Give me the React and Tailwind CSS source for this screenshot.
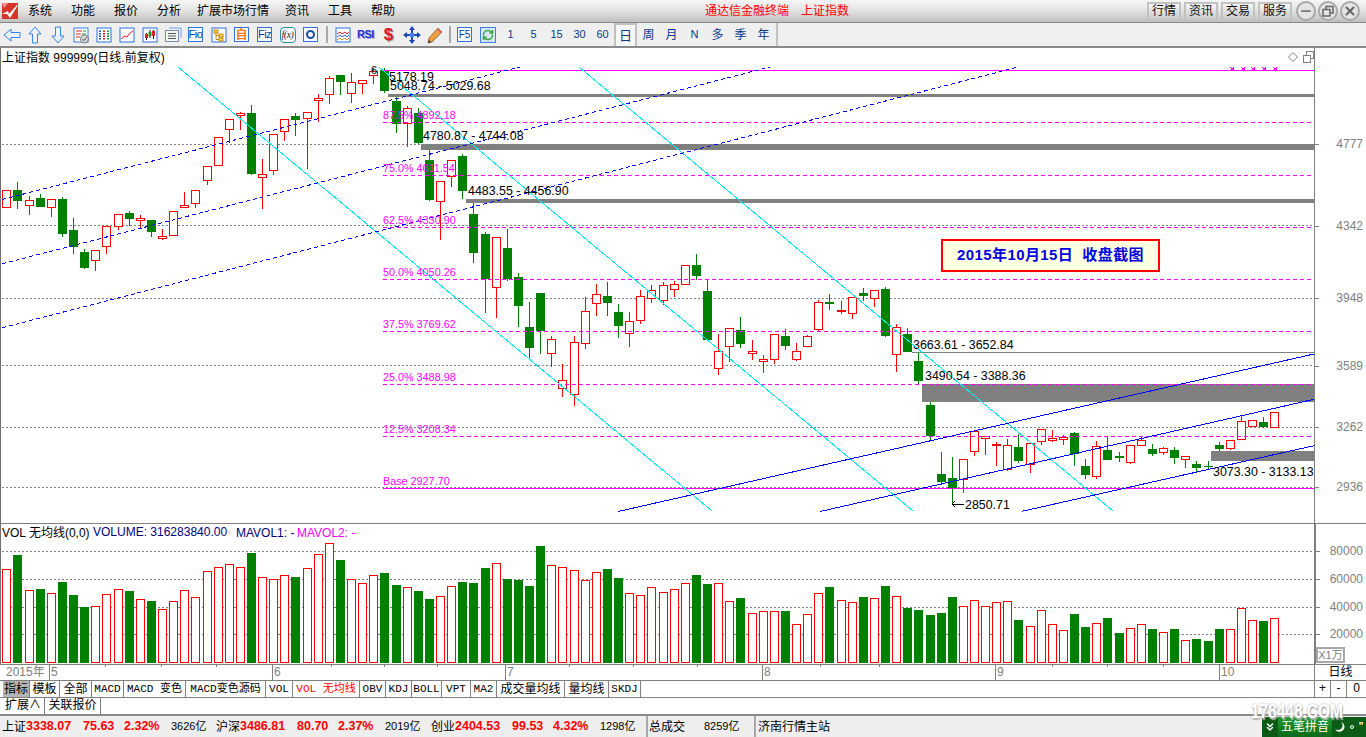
import React from 'react';
import { Minus, X, RefreshCw, ChevronsDown } from 'lucide-react';

// ── candle data: [g|r, bodyTop, bodyBottom, wickTop, wickBottom] in page pixels ─────
const CANDLES = [
  ['r',190,207],['g',190,200,182,208],['r',200,205,196,214],['g',198,206,194,206],['r',199,207,199,216],
  ['g',199,233,197,236],['g',230,246,218,253],['g',252,267,249,268],['r',250,260,250,270],['r',226,246,226,253],
  ['r',214,226,214,229],['g',213,218,211,225],['r',218,220,215,227],['g',220,231,220,236],['r',236,238,229,239],
  ['r',211,235],['r',205,207,192,207],['r',190,203,190,207],['r',166,180,166,184],['r',137,165],
  ['r',119,129,119,142],['r',113,115,112,129],['g',113,173,105,174],['r',174,177,159,208],['r',134,170,134,174],
  ['r',119,131,119,140],['g',116,119,113,135],['r',112,118,112,168],['r',98,100,94,121],['r',78,94,76,103],
  ['g',75,81,75,94],['r',82,93,73,102],['r',80,83,80,93],['r',71,75,68,83],['g',70,90,68,92],
  ['g',101,123,97,132],['r',108,123,106,146],['g',113,142,108,143],['g',160,199,150,200],['r',181,201,181,239],
  ['r',160,176,160,186],['g',156,190,154,198],['g',214,252,203,262],['g',234,278,232,312],['r',237,287,237,317],
  ['g',248,278,229,280],['g',277,305,273,326],['g',327,347,302,357],['g',293,330,293,353],['r',339,353,336,366],
  ['r',380,388,364,396],['r',342,394,336,405],['r',311,343,297,348],['r',294,303,284,315],['g',296,302,282,315],
  ['g',312,325,304,337],['r',321,333,312,346],['r',296,320,290,323],['r',290,298,285,302],['r',285,300,282,304],
  ['r',284,289,281,296],['r',265,284],['g',265,275,254,279],['g',291,339,279,339],['r',351,368,334,374],
  ['r',328,346,328,361],['g',330,343,317,347],['r',351,353,340,359],['r',359,361,355,372],['r',334,359,334,363],
  ['g',336,345,329,349],['r',351,359,343,360],['r',336,346,335,346],['r',302,329,300,330],['g',302,303,294,309],
  ['r',310,311,301,313],['r',297,313,297,318],['g',293,295,288,300],['r',290,298,290,306],['g',289,335,287,336],
  ['r',327,354,324,371],['g',334,351,328,351],['g',361,380,353,383],['g',405,435,402,439],['g',474,481,452,484],
  ['g',478,487,457,503],['r',459,479,459,492],['r',431,451,431,455],['r',436,438,436,454],['r',444,445,442,465],
  ['r',445,469,439,470],['g',447,460,434,462],['r',443,464,443,472],['r',429,441,429,444],['r',438,440,430,441],
  ['r',437,439,435,444],['g',433,453,432,465],['g',466,474,459,478],['r',446,476,441,478],['g',450,459,436,459],
  ['g',456,457,452,461],['r',445,462,445,463],['r',440,445,437,445],['g',449,453,444,455],['r',448,452,447,454],
  ['g',450,457,447,463],['r',456,459,456,467],['g',464,467,461,471],['g',466,466,461,469],['g',445,448,442,450],
  ['r',440,448,440,449],['r',421,439,416,439],['r',420,426],['g',422,426,417,427],['r',412,427],
];

// volume bar tops, measured as (y - 520) * 3; bars all sit on y=663
const VOL_ZOOM = [
  148,105,211,207,220,186,225,261,259,223,208,213,238,243,268,244,211,232,154,142,133,142,99,172,178,166,171,145,103,70,
  120,178,190,166,159,195,202,213,237,229,199,186,189,144,130,177,180,198,78,136,142,151,181,157,147,174,220,226,202,217,208,
  190,165,192,190,244,234,280,274,274,273,313,283,220,201,241,247,231,235,198,229,264,270,285,279,231,259,241,259,247,244,
  300,319,271,313,331,282,321,310,294,339,325,313,327,337,327,361,357,363,327,328,265,301,303,295,
];

const centerX = (i) => Math.round(6.3 + 11.123 * i);

const FIB = [
  ['87.5% 4892.18', 122, 115],
  ['75.0% 4611.54', 175, 168],
  ['62.5% 4330.90', 227, 220],
  ['50.0% 4050.26', 279, 272],
  ['37.5% 3769.62', 331, 324],
  ['25.0% 3488.98', 384, 377],
  ['12.5% 3208.34', 436, 429],
];

const PRICE_LABELS = [
  ['5178.19', 389, 76],
  ['5048.74 - 5029.68', 390, 85.5],
  ['4780.87 - 4744.08', 423, 135],
  ['4483.55 - 4456.90', 468, 190],
  ['3663.61 - 3652.84', 913, 344],
  ['3490.54 - 3388.36', 925, 375],
  ['3073.30 - 3133.13', 1213, 471],
  ['2850.71', 965, 504],
];

function MainChart() {
  return (
    <svg width="1314" height="475" viewBox="0 48 1314 475" className="block">
      {/* dotted price grid */}
      {[144, 225, 298, 365, 427, 487].map((y) => (
        <line key={y} x1="2" x2="1314" y1={y + 0.5} y2={y + 0.5} stroke="#808080" strokeDasharray="2 2" shapeRendering="crispEdges" />
      ))}

      {/* candles */}
      {CANDLES.map(([t, top, bot, wt, wb], i) => {
        const x = centerX(i);
        const color = t === 'r' ? '#ff0000' : '#008000';
        return (
          <g key={i} shapeRendering="crispEdges">
            <rect x={x} y={wt ?? top} width="1" height={(wb ?? bot) - (wt ?? top) + 1} fill={color} />
            {t === 'g' ? (
              <rect x={x - 4} y={top} width="9" height={bot - top + 1} fill={color} />
            ) : (
              <rect x={x - 3.5} y={top + 0.5} width="8" height={bot - top} fill="#fff" stroke={color} />
            )}
          </g>
        );
      })}

      {/* gray zones */}
      <g fill="#808080" shapeRendering="crispEdges">
        <rect x="388" y="94" width="926" height="3" />
        <rect x="421" y="144" width="893" height="6" />
        <rect x="466" y="199" width="848" height="4" />
        <rect x="912" y="352" width="402" height="1" />
        <rect x="922" y="384" width="392" height="18" />
        <rect x="1211" y="451" width="103" height="10" />
      </g>

      {/* fibonacci lines */}
      <g stroke="#ff00ff" shapeRendering="crispEdges">
        <line x1="383" x2="1314" y1="70.5" y2="70.5" />
        <line x1="383" x2="1314" y1="488.5" y2="488.5" />
        {FIB.map(([, y]) => (
          <line key={y} x1="383" x2="1314" y1={y + 0.5} y2={y + 0.5} strokeDasharray="4 3" />
        ))}
      </g>
      <g shapeRendering="crispEdges">
        {[1232, 1243, 1253, 1264, 1275].map((x) => (
          <g key={x}>
            <rect x={x - 1} y="68" width="3" height="3" fill="#ff00ff" />
            <path d={`M${x - 2} 67 L${x + 2} 71 M${x + 2} 67 L${x - 2} 71`} stroke="#ff00ff" />
          </g>
        ))}
      </g>

      {/* channel lines */}
      <g stroke="#00f0f0" shapeRendering="crispEdges">
        <line x1="178" y1="67" x2="712" y2="511" />
        <line x1="379" y1="67" x2="913" y2="511" />
        <line x1="579" y1="67" x2="1113" y2="511" />
      </g>
      <g stroke="#0000ff" strokeDasharray="4 3" shapeRendering="crispEdges">
        <line x1="2" y1="199.5" x2="520" y2="67" />
        <line x1="2" y1="263.8" x2="770" y2="67" />
        <line x1="2" y1="327.8" x2="1018" y2="67" />
      </g>
      <g stroke="#0000ff" shapeRendering="crispEdges">
        <line x1="618" y1="511.5" x2="1314" y2="354" />
        <line x1="820" y1="511.5" x2="1314" y2="399.3" />
        <line x1="1022" y1="511.3" x2="1314" y2="445.7" />
      </g>

      {/* labels */}
      <g fontSize="10.8" fill="#ff00ff">
        {FIB.map(([label, , y]) => (
          <text key={label} x="383" y={y + 4}>{label}</text>
        ))}
        <text x="383" y="485">Base 2927.70</text>
      </g>
      <g fontSize="12.4" fill="#000">
        <text x="371" y="74" fontSize="11">6</text>
        {PRICE_LABELS.map(([label, x, y]) => (
          <text key={label} x={x} y={y + 4.5}>{label}</text>
        ))}
      </g>
      <path d="M952 504 H964 M952 504 l3 -3 M952 504 l3 3" stroke="#000" fill="none" shapeRendering="crispEdges" />
      <path d="M1293 52.5 l4.5 4.5 -4.5 4.5 -4.5 -4.5 z" stroke="#808080" fill="#fff" />
      <path d="M1303.5 55.5 h7 v7 h-7 z M1306.5 55 v-3.5 h7 v7 h-3" stroke="#808080" fill="#fff" shapeRendering="crispEdges" />
    </svg>
  );
}

function VolumeChart() {
  const tops = VOL_ZOOM.map((z) => Math.round(520 + z / 3));
  return (
    <svg width="1314" height="140" viewBox="0 524 1314 140" className="block">
      {[551, 579, 607, 634].map((y) => (
        <line key={y} x1="2" x2="1314" y1={y + 0.5} y2={y + 0.5} stroke="#808080" strokeDasharray="2 2" shapeRendering="crispEdges" />
      ))}
      {tops.map((top, i) => {
        const x = centerX(i);
        const t = CANDLES[i][0];
        return t === 'g' ? (
          <rect key={i} x={x - 4} y={top} width="9" height={663 - top} fill="#008000" shapeRendering="crispEdges" />
        ) : (
          <rect key={i} x={x - 3.5} y={top + 0.5} width="8" height={662 - top} fill="#fff" stroke="#ff0000" shapeRendering="crispEdges" />
        );
      })}
    </svg>
  );
}

// ── toolbar pieces ─────────────────────────────────────────────────────────────
function BoxIcon({ children, cls = '' }) {
  return (
    <div className={`w-[15px] h-[15px] border border-[#2f74dc] bg-white flex items-center justify-center overflow-hidden ${cls}`}>
      {children}
    </div>
  );
}

function Cell({ children }) {
  return <div className="w-[23px] h-full flex items-center justify-center shrink-0">{children}</div>;
}

function Svg20({ children }) {
  return <svg width="20" height="20" viewBox="0 0 20 20" fill="none">{children}</svg>;
}

function Toolbar() {
  const blueFill = { fill: '#eaf2ff', stroke: '#3b80e4' };
  return (
    <div className="h-[25px] bg-[#efefef] border-b-2 border-[#8a8a8a] flex items-stretch">
      <Cell><Svg20><path d="M2 10 L9 4 V7.5 H18 V12.5 H9 V16 Z" {...blueFill} /></Svg20></Cell>
      <Cell><Svg20><path d="M10 2 L16 9 H12.5 V18 H7.5 V9 H4 Z" {...blueFill} /></Svg20></Cell>
      <Cell><Svg20><path d="M10 18 L16 11 H12.5 V2 H7.5 V11 H4 Z" {...blueFill} /></Svg20></Cell>
      <Cell>
        <Svg20>
          <rect x="3" y="3" width="14" height="14" stroke="#3b80e4" fill="#fff" />
          <path d="M5 6h6M5 9h5M5 12h4" stroke="#e02020" />
          <path d="M12 6h3M11 9h4" stroke="#149a2a" />
          <circle cx="13.5" cy="14" r="4" fill="#d8d8d8" stroke="#777" />
          <path d="M11.5 14l1.5 1.5 2.5-3" stroke="#444" />
        </Svg20>
      </Cell>
      <Cell>
        <Svg20>
          <rect x="3" y="3" width="14" height="14" stroke="#2f74dc" fill="#fff" />
          <path d="M6 5.5v9" stroke="#2050d0" strokeWidth="2" strokeDasharray="1.5 1" />
          <path d="M10 5.5v9" stroke="#e02020" strokeWidth="2" strokeDasharray="1.5 1" />
          <path d="M14 5.5v9" stroke="#149a2a" strokeWidth="2" strokeDasharray="1.5 1" />
        </Svg20>
      </Cell>
      <Cell>
        <Svg20>
          <rect x="3" y="3" width="14" height="14" stroke="#2f74dc" fill="#fff" />
          <path d="M4 14 L8 11 L10 12 L13 8 L16 6" stroke="#e02020" />
        </Svg20>
      </Cell>
      <Cell>
        <Svg20>
          <rect x="3" y="3" width="14" height="14" stroke="#2f74dc" fill="#fff" />
          <path d="M6.5 8v7M10 5v8M13.5 5v9" stroke="#111" />
          <rect x="5" y="9" width="3" height="4" fill="#e02020" />
          <rect x="8.5" y="7" width="3" height="4" fill="#149a2a" />
          <rect x="12" y="6" width="3" height="5" fill="#e02020" />
        </Svg20>
      </Cell>
      <Cell>
        <Svg20>
          <path d="M6 3 H18 V13" stroke="#6aa0e8" />
          <rect x="2.5" y="5.5" width="13" height="11" stroke="#7a8aa8" fill="#f4f6fa" />
          <path d="M5 8.5h8M5 11h8M5 13.5h8" stroke="#555" />
        </Svg20>
      </Cell>
      <Cell><BoxIcon><span className="text-[11px] leading-none text-[#003a9a] font-['Liberation_Sans'] tracking-[-0.5px]">Fio</span></BoxIcon></Cell>
      <Cell>
        <Svg20>
          <rect x="3" y="3" width="14" height="14" stroke="#2f74dc" fill="#fff" />
          <rect x="5" y="5" width="4" height="3" fill="#ffd84a" stroke="#c08a10" />
          <rect x="10" y="9" width="4" height="3" fill="#ffd84a" stroke="#c08a10" />
          <rect x="10" y="13" width="4" height="3" fill="#ffd84a" stroke="#c08a10" />
          <path d="M7 8v6.5h3M7 10.5h3" stroke="#c08a10" />
        </Svg20>
      </Cell>
      <Cell><BoxIcon><span className="text-[12px] leading-none font-bold text-[#f07818]">自</span></BoxIcon></Cell>
      <Cell><BoxIcon><span className="text-[11px] leading-none text-[#003a9a] font-['Liberation_Sans'] tracking-[-0.5px]">Fiz</span></BoxIcon></Cell>
      <Cell>
        <div className="w-[16px] h-[16px] rounded-[4px] border border-[#1f8f9a] bg-white flex items-center justify-center">
          <span className="text-[10px] leading-none italic text-[#123] font-['Liberation_Serif'] tracking-[-0.5px]">f(x)</span>
        </div>
      </Cell>
      <Cell><BoxIcon><div className="w-[9px] h-[9px] rounded-full border-2 border-[#1a4fa8]" /></BoxIcon></Cell>

      <div className="w-[9px] flex justify-center py-[3px]"><div className="w-[2px] bg-[#a8a8a8]" /></div>

      <Cell>
        <Svg20>
          <rect x="3" y="3" width="14" height="14" stroke="#2f74dc" fill="#fff" />
          <path d="M4 9l3-2 2 2 3-2 2 2 2-2" stroke="#e02020" />
          <path d="M4 12l3-2 2 2 3-2 2 2 2-2" stroke="#3060e0" />
          <path d="M4 15l3-2 2 2 3-2 2 2 2-2" stroke="#e09020" />
        </Svg20>
      </Cell>
      <Cell><span className="text-[11px] leading-none font-bold text-[#2233cc] font-['Liberation_Sans'] tracking-[-0.5px] [text-shadow:1px_1px_0_#a8b0e0]">RSI</span></Cell>
      <Cell><span className="text-[17px] leading-none font-bold text-[#d62020] font-['Liberation_Sans'] [text-shadow:1px_1px_0_#999]">$</span></Cell>
      <Cell>
        <Svg20>
          <path d="M10 1l3 4h-6zM10 19l3-4h-6zM1 10l4-3v6zM19 10l-4-3v6z" fill="#1844b8" />
          <path d="M10 5v10M5 10h10" stroke="#1844b8" strokeWidth="2" />
          <circle cx="10" cy="10" r="2.5" fill="#4a80e8" />
        </Svg20>
      </Cell>
      <Cell>
        <Svg20>
          <path d="M4 13 L13 3 L17 7 L7 17 L3 18 Z" fill="#f0a040" stroke="#9a7040" />
          <path d="M13 3 L17 7 L15.5 8.5 L11.5 4.5 Z" fill="#e07070" />
          <path d="M3 18 L4 15 L6 17 Z" fill="#333" />
        </Svg20>
      </Cell>

      <div className="w-[7px] flex justify-center py-[3px]"><div className="w-[2px] bg-[#a8a8a8]" /></div>

      <Cell><BoxIcon cls="border-[#1f6ad8]"><span className="text-[10px] leading-none text-[#003a9a] font-['Liberation_Sans']">F5</span></BoxIcon></Cell>
      <Cell>
        <div className="w-[16px] h-[16px] border border-[#3b80e4] bg-[#d7e6fa] flex items-center justify-center">
          <RefreshCw size={12} strokeWidth={3} color="#39a83c" />
        </div>
      </Cell>
      {['1', '5', '15', '30', '60'].map((t) => (
        <Cell key={t}><span className="text-[11px] text-[#0a3a8a]">{t}</span></Cell>
      ))}
      <div className="w-[23px] h-full flex items-center justify-center bg-[#f7f7f7] border-2 border-[#c0c0c0] border-b-0 text-[13px] text-[#0a3a8a]">日</div>
      {['周', '月', 'N', '多', '季', '年'].map((t) => (
        <Cell key={t}><span className={t === 'N' ? 'text-[11px] text-[#0a3a8a]' : 'text-[12px] text-[#0a3a8a]'}>{t}</span></Cell>
      ))}
      <div className="w-[2px] ml-[1px] bg-[#c4c4c4]" />
    </div>
  );
}

function MenuBar() {
  const menus = [
    ['系统', 'w-[43px]'], ['功能', 'w-[43px]'], ['报价', 'w-[43px]'], ['分析', 'w-[40px]'],
    ['扩展市场行情', 'w-[88px]'], ['资讯', 'w-[43px]'], ['工具', 'w-[43px]'], ['帮助', 'w-[43px]'],
  ];
  return (
    <div className="h-[23px] bg-linear-to-b from-[#f6f6f6] via-[#e2e2e2] to-[#bfbfbf] border-b border-[#8a8a8a] flex items-center">
      <svg width="16" height="16" viewBox="0 0 16 16" className="ml-[2px] mr-[10px] shrink-0">
        <rect width="16" height="16" fill="#d8352a" />
        <path d="M0 11 L6 8 L7 11 L15 2 L16 2 L8 15 L5 11 Z" fill="#fff" />
        <path d="M0 0 L6 0 L2 5 Z" fill="#f29a90" />
      </svg>
      {menus.map(([m, w]) => (
        <span key={m} className={`${w} text-[12px] text-black`}>{m}</span>
      ))}
      <div className="ml-[291px] text-[12px] text-[#ff0000] whitespace-nowrap">通达信金融终端</div>
      <div className="ml-[12px] text-[12px] text-[#ff0000] whitespace-nowrap">上证指数</div>
      <div className="ml-auto flex items-center gap-[3px] mr-[6px]">
        {['行情', '资讯', '交易', '服务'].map((b) => (
          <div key={b} className="w-[34px] h-[19px] border-2 border-[#c2c2c2] bg-linear-to-b from-[#f8f8f8] to-[#c9c9c9] flex items-center justify-center text-[12px] text-[#111]">{b}</div>
        ))}
        <div className="flex items-center gap-[2px] ml-[1px]">
          <div className="w-[20px] h-[20px] rounded-full border-2 border-[#a8a8a8] bg-[#e4e4e4] flex items-center justify-center"><Minus size={14} strokeWidth={3} color="#777" /></div>
          <div className="w-[20px] h-[20px] rounded-full border-2 border-[#a8a8a8] bg-[#e4e4e4] flex items-center justify-center">
            <svg width="12" height="12" viewBox="0 0 12 12" fill="none"><path d="M1 4.5h7v6.5h-7zM4 4.5v-3h7v6.5h-3" stroke="#666" strokeWidth="1.5" /></svg>
          </div>
          <div className="w-[20px] h-[20px] rounded-full border-2 border-[#a8a8a8] bg-[#e4e4e4] flex items-center justify-center"><X size={14} strokeWidth={3.5} color="#666" /></div>
        </div>
      </div>
    </div>
  );
}

const PRICE_AXIS = [[4777, 144], [4342, 226], [3948, 298], [3589, 366], [3262, 427], [2936, 487]];
const VOL_AXIS = [[80000, 551], [60000, 579], [40000, 607], [20000, 634]];

function Axis({ items, offset, children, cls = '' }) {
  return (
    <div className={`relative w-[52px] border-l border-[#808080] ${cls}`}>
      {items.map(([v, y]) => (
        <React.Fragment key={v}>
          <div className="absolute left-0 w-[4px] h-px bg-[#808080]" style={{ top: y - offset }} />
          <div className="absolute right-[3px] text-[12px] leading-[14px] text-[#808080]" style={{ top: y - offset - 7 }}>{v}</div>
        </React.Fragment>
      ))}
      {children}
    </div>
  );
}

const TICKS = [105, 161, 216, 331, 384, 437, 569, 633, 697, 820, 879, 1052, 1107, 1163];
const MONTHS = [['5', 49], ['6', 272], ['7', 505], ['8', 762], ['9', 995], ['10', 1219]];

function TimeAxis() {
  return (
    <div className="h-[17px] flex border-t border-b border-[#808080]">
      <div className="relative w-[1314px] shrink-0">
        <div className="w-[49px] h-full text-[#808080] text-[12px] leading-[15px] pl-[6px]">2015年</div>
        {TICKS.map((x) => (
          <div key={x} className="absolute top-0 w-px h-[2px] bg-[#808080]" style={{ left: x }} />
        ))}
        {MONTHS.map(([m, x]) => (
          <div key={m} className="absolute top-0 h-full border-l border-[#808080] pl-[1px] text-[12px] leading-[15px] text-[#808080]" style={{ left: x }}>{m}</div>
        ))}
      </div>
      <div className="flex-1 border-l border-[#808080] text-center text-[12px] leading-[15px] text-black">日线</div>
    </div>
  );
}

const TABS = [
  ['指标', 'w-[27px] bg-[#b4b4b4]', ''], ['模板', 'w-[30px]', ''], ['全部', 'w-[32px]', ''],
  ['MACD', 'w-[32px]', 'm'], ['MACD 变色', 'w-[62px]', 'm'], ['MACD变色源码', 'w-[80px]', 'm'],
  ['VOL', 'w-[27px]', 'm'], ['VOL 无均线', 'w-[67px] text-[#ff0000]', 'm'], ['OBV', 'w-[26px]', 'm'],
  ['KDJ', 'w-[26px]', 'm'], ['BOLL', 'w-[30px]', 'm'], ['VPT', 'w-[29px]', 'm'], ['MA2', 'w-[26px]', 'm'],
  ['成交量均线', 'w-[68px]', ''], ['量均线', 'w-[44px]', ''], ['SKDJ', 'w-[32px]', 'm'],
];

function TabRow() {
  return (
    <div className="h-[17px] flex border-b border-[#808080]">
      <div className="w-[1314px] shrink-0 flex pl-[3px]">
        {TABS.map(([t, w, f]) => (
          <div
            key={t}
            className={`${w} h-full border-r border-[#808080] flex items-center justify-center whitespace-nowrap ${f === 'm' ? "font-['Liberation_Mono','Noto_Sans_CJK_SC',monospace] text-[11px]" : 'text-[12px]'}`}
          >
            {t}
          </div>
        ))}
      </div>
      <div className="flex-1 flex border-l border-[#808080] text-[12px]">
        <div className="w-[16px] border-r border-[#808080] text-center leading-[15px]">+</div>
        <div className="w-[16px] border-r border-[#808080] text-center leading-[15px]">-</div>
        <div className="flex-1 text-center leading-[15px]">0</div>
      </div>
    </div>
  );
}

function Status() {
  const red = 'text-[#ff0000] font-bold text-[12.5px]';
  const group = (name, vals, amount, w) => (
    <>
      <span className="w-[24px] shrink-0">{name}</span>
      <span className={`w-[57px] shrink-0 ${red}`}>{vals[0]}</span>
      <span className={`w-[41px] shrink-0 ${red}`}>{vals[1]}</span>
      <span className={`w-[47px] shrink-0 ${red}`}>{vals[2]}</span>
      <span className={`${w} shrink-0 text-[11px]`}>{amount}</span>
    </>
  );
  return (
    <div className="relative h-[21px] bg-[#eeeeee] flex items-center text-[12px] text-black pl-[2px] whitespace-nowrap">
      {group('上证', ['3338.07', '75.63', '2.32%'], '3626亿', 'w-[45px]')}
      {group('沪深', ['3486.81', '80.70', '2.37%'], '2019亿', 'w-[46px]')}
      {group('创业', ['2404.53', '99.53', '4.32%'], '1298亿', 'w-[46px]')}
      <div className="h-full border-l-2 border-[#a8a8a8] pl-[1px] flex items-center w-[108px]">
        <span className="w-[55px]">总成交</span>
        <span className="text-[11px]">8259亿</span>
      </div>
      <div className="h-full border-l-2 border-[#a8a8a8] pl-[2px] flex items-center">济南行情主站</div>

      {/* IME bar sits over the status bar */}
      <div className="absolute right-0 bottom-0 w-[104px] h-[20px] rounded-tl-[4px] bg-linear-to-b from-[#1f9a2f] to-[#0c6a18] flex items-center text-white">
        <div className="w-[16px] h-full bg-[#0b5a14] flex items-center justify-center"><ChevronsDown size={12} strokeWidth={3} /></div>
        <div className="w-[54px] text-center text-[12px]">五笔拼音</div>
        <div className="flex-1 h-full bg-[#0d5c16] flex items-center justify-center gap-[5px]">
          <svg width="10" height="10" viewBox="0 0 10 10"><path d="M6 0 A5 5 0 1 1 0 7 A4 4 0 0 0 6 0Z" fill="#fff" /></svg>
          <span className="w-[4px] h-[4px] rounded-full border border-white" />
          <span className="text-[10px] leading-none font-bold">”</span>
        </div>
      </div>
      <div className="absolute right-[23px] top-[-14px] text-[15.5px] leading-[20px] font-bold text-white font-['Liberation_Sans'] scale-y-125 [text-shadow:0_0_2px_#aaa,1px_1px_1px_#bbb]">178448.COM</div>
    </div>
  );
}

export default function App() {
  return (
    <div className="w-[1366px] h-[737px] overflow-hidden bg-white text-black font-['Liberation_Sans','Noto_Sans_CJK_SC',sans-serif] flex flex-col">
      <MenuBar />
      <Toolbar />

      {/* price pane */}
      <div className="relative h-[476px] flex border-b border-[#808080]">
        <div className="relative w-[1314px] shrink-0 border-l border-[#707070]">
          <div className="-ml-px"><MainChart /></div>
          <div className="absolute left-[1px] top-[3px] text-[12px] leading-[14px] whitespace-nowrap">上证指数 999999(日线.前复权)</div>
          <div className="absolute left-[940px] top-[191px] w-[219px] h-[33px] border-2 border-[#ff0000] bg-[#ffffe1] flex items-center justify-center text-[15px] tracking-[0.4px] font-bold text-[#0000e0] whitespace-nowrap">
            2015年10月15日&nbsp;&nbsp;收盘截图
          </div>
        </div>
        <Axis items={PRICE_AXIS} offset={48} />
      </div>

      {/* volume pane */}
      <div className="h-[140px] flex">
        <div className="relative w-[1314px] shrink-0 border-l border-[#707070]">
          <div className="-ml-px"><VolumeChart /></div>
          <div className="absolute left-[1px] top-[1px] flex items-center text-[12px] leading-[14px] whitespace-nowrap">
            <span className="w-[91px]">VOL 无均线(0,0)</span>
            <span className="w-[143px] text-[#000080]">VOLUME: 316283840.00<span className="text-[9px] text-[#ff9a9a]">↑</span></span>
            <span className="w-[61px] text-[#000080]">MAVOL1: -</span>
            <span className="text-[#ff00ff]">MAVOL2: -</span>
          </div>
        </div>
        <Axis items={VOL_AXIS} offset={524} cls="border-l-2">
          <div className="absolute left-0 bottom-[1px] w-[29px] h-[16px] border-2 border-[#a8a8a8] text-[11px] leading-[12px] text-[#808080] text-center whitespace-nowrap overflow-hidden">X1万</div>
        </Axis>
      </div>

      <TimeAxis />
      <TabRow />

      <div className="h-[18px] flex border-b-2 border-[#8a8a8a] text-[12px]">
        <div className="w-[45px] border-r border-[#808080] pl-[5px] leading-[15px]">扩展∧</div>
        <div className="w-[56px] border-r border-[#808080] text-center leading-[15px]">关联报价</div>
      </div>

      <Status />
    </div>
  );
}
